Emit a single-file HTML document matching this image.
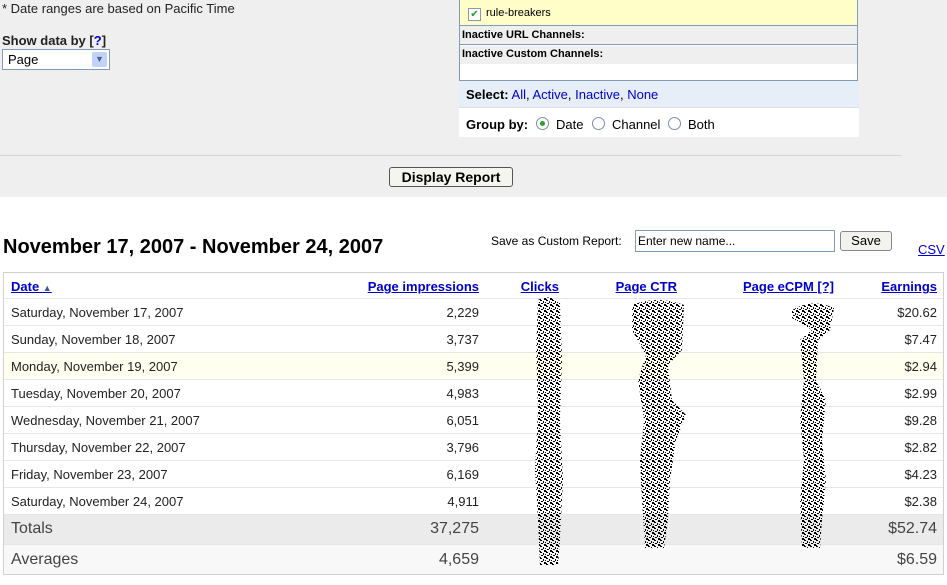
<!DOCTYPE html>
<html><head><meta charset="utf-8"><style>
*{margin:0;padding:0;box-sizing:border-box}
body{width:947px;height:585px;overflow:hidden;background:#fff;font-family:"Liberation Sans",Arial,sans-serif;position:relative;color:#000}
.a{position:absolute;white-space:nowrap}
a,.lk{color:#00c;}
.top{position:absolute;left:0;top:0;width:947px;height:197px;background:#efefef}
.hl{position:absolute;left:0;top:155px;width:901px;height:1px;background:#d4d4d4}
.panel{position:absolute;left:459px;top:0;width:399px;height:81px;border:1px solid #7f9db9;border-top:none;background:#fff}
.tbl{position:absolute;left:3px;top:272px;width:941px;height:303px;border:1px solid #d0d0d0}
.row{position:absolute;left:0;width:939px;height:27px;border-top:1px solid #e6e6e6;font-size:13px;color:#222}
.row span{position:absolute;top:6px}
.hd{font-size:13px;font-weight:bold;text-decoration:underline;color:#00c;top:6px}
</style></head><body>
<div class="top"></div>
<div class="a" style="left:2px;top:1px;font-size:13px;color:#222">* Date ranges are based on Pacific Time</div>
<div class="a" style="left:2px;top:33px;font-size:13px;font-weight:bold;color:#222">Show data by [<span style="color:#00c">?</span>]</div>
<div class="a" style="left:2px;top:49px;width:108px;height:21px;border:1px solid #7f9db9;background:#fff;font-size:13px;padding:2px 0 0 5px">Page
<div style="position:absolute;right:2px;top:2px;width:15px;height:15px;background:#c1d3fb;border-radius:2px;color:#4d6185;font-size:9px;text-align:center;line-height:15px">&#9660;</div></div>
<div class="hl"></div>
<div class="panel">
<div style="position:absolute;left:0;top:0;width:397px;height:26px;background:#fffdc8;border-bottom:1px solid #7f9db9"></div>
<div class="a" style="left:8px;top:8px;width:13px;height:13px;border:1px solid #8a9aaa;background:#fff;color:#21a121;font-size:10px;line-height:11px;text-align:center">&#10004;</div>
<div class="a" style="left:26px;top:7px;font-size:11px">rule-breakers</div>
<div style="position:absolute;left:0;top:26px;width:397px;height:19px;background:#efefef;border-bottom:1px solid #7f9db9"></div>
<div class="a" style="left:2px;top:29px;font-size:11px;font-weight:bold">Inactive URL Channels:</div>
<div style="position:absolute;left:0;top:46px;width:397px;height:18px;background:#efefef"></div>
<div class="a" style="left:2px;top:48px;font-size:11px;font-weight:bold">Inactive Custom Channels:</div>
</div>
<div style="position:absolute;left:459px;top:81px;width:400px;height:27px;background:#e6eef8;border-bottom:1px solid #dde"></div>
<div class="a" style="left:466px;top:87px;font-size:13px"><b>Select:</b> <span class="lk">All</span>, <span class="lk">Active</span>, <span class="lk">Inactive</span>, <span class="lk">None</span></div>
<div style="position:absolute;left:459px;top:108px;width:400px;height:29px;background:#fff"></div>
<div class="a" style="left:466px;top:117px;font-size:13px"><b>Group by:</b></div>
<div class="a" style="left:536px;top:117px;width:13px;height:13px;border:1px solid #7a8ea8;border-radius:50%;background:#fff"><div style="position:absolute;left:3px;top:3px;width:5px;height:5px;border-radius:50%;background:#2aa02a"></div></div>
<div class="a" style="left:556px;top:117px;font-size:13px">Date</div>
<div class="a" style="left:592px;top:117px;width:13px;height:13px;border:1px solid #7a8ea8;border-radius:50%;background:#fff"></div>
<div class="a" style="left:612px;top:117px;font-size:13px">Channel</div>
<div class="a" style="left:668px;top:117px;width:13px;height:13px;border:1px solid #7a8ea8;border-radius:50%;background:#fff"></div>
<div class="a" style="left:688px;top:117px;font-size:13px">Both</div>
<div class="a" style="left:389px;top:167px;width:124px;height:20px;border:1px solid #555;border-radius:3px;background:#f5f5f0;font-size:14px;font-weight:bold;text-align:center;line-height:18px">Display Report</div>

<div class="a" style="left:3px;top:236px;font-size:20px;font-weight:bold">November 17, 2007 - November 24, 2007</div>
<div class="a" style="left:491px;top:234px;font-size:12px">Save as Custom Report:</div>
<div class="a" style="left:635px;top:230px;width:200px;height:22px;border:1px solid #7f9db9;font-size:12px;padding:3px 2px">Enter new name...</div>
<div class="a" style="left:840px;top:231px;width:52px;height:20px;border:1px solid #888;border-radius:3px;background:#f2f2ee;font-size:13px;text-align:center;line-height:18px">Save</div>
<div class="a" style="left:918px;top:242px;font-size:13px;color:#00c;text-decoration:underline">CSV</div>

<div class="tbl">
<div class="a hd" style="left:7px">Date <span style="font-size:9px;color:#3a5a8a;text-decoration:none">&#9650;</span></div>
<div class="a hd" style="right:464px">Page impressions</div>
<div class="a hd" style="right:384px">Clicks</div>
<div class="a hd" style="right:266px">Page CTR</div>
<div class="a hd" style="right:109px">Page eCPM [?]</div>
<div class="a hd" style="right:6px">Earnings</div>

<div class="row" style="top:25px"><span style="left:7px">Saturday, November 17, 2007</span><span style="right:464px">2,229</span><span style="right:6px">$20.62</span></div>
<div class="row" style="top:52px"><span style="left:7px">Sunday, November 18, 2007</span><span style="right:464px">3,737</span><span style="right:6px">$7.47</span></div>
<div class="row" style="top:79px;background:#fffff0"><span style="left:7px">Monday, November 19, 2007</span><span style="right:464px">5,399</span><span style="right:6px">$2.94</span></div>
<div class="row" style="top:106px"><span style="left:7px">Tuesday, November 20, 2007</span><span style="right:464px">4,983</span><span style="right:6px">$2.99</span></div>
<div class="row" style="top:133px"><span style="left:7px">Wednesday, November 21, 2007</span><span style="right:464px">6,051</span><span style="right:6px">$9.28</span></div>
<div class="row" style="top:160px"><span style="left:7px">Thursday, November 22, 2007</span><span style="right:464px">3,796</span><span style="right:6px">$2.82</span></div>
<div class="row" style="top:187px"><span style="left:7px">Friday, November 23, 2007</span><span style="right:464px">6,169</span><span style="right:6px">$4.23</span></div>
<div class="row" style="top:214px"><span style="left:7px">Saturday, November 24, 2007</span><span style="right:464px">4,911</span><span style="right:6px">$2.38</span></div>
<div class="row" style="top:241px;height:30px;background:#ebebeb;font-size:16px;color:#444"><span style="left:7px;top:5px">Totals</span><span style="right:464px;top:5px">37,275</span><span style="right:6px;top:5px">$52.74</span></div>
<div class="row" style="top:271px;height:30px;background:#f8f8f8;font-size:16px;color:#444"><span style="left:7px;top:6px">Averages</span><span style="right:464px;top:6px">4,659</span><span style="right:6px;top:6px">$6.59</span></div>
</div>

<svg class="a" style="left:0;top:0" width="947" height="585">
<defs><pattern id="n" width="6" height="6" patternUnits="userSpaceOnUse"><rect width="2" height="1" fill="#000"/><rect x="3" y="1" width="1" height="2" fill="#000"/><rect x="1" y="3" width="2" height="1" fill="#000"/><rect x="4" y="4" width="2" height="2" fill="#000"/><rect x="0" y="5" width="1" height="1" fill="#000"/><rect x="5" y="2" width="1" height="1" fill="#000"/></pattern></defs>
<path d="M538 300 Q548 294 560 302 L562 360 L560 420 L563 480 L560 540 L558 565 L540 565 L538 520 L535 470 L538 410 L536 350 Z" fill="url(#n)"/>
<path d="M632 305 Q658 295 684 305 L682 350 L668 365 L672 400 L686 415 L676 440 L670 480 L668 520 L664 548 L645 548 L642 500 L640 460 L644 420 L638 380 L646 355 L632 330 Z" fill="url(#n)"/>
<path d="M792 310 Q812 298 834 308 L830 330 L818 340 L816 380 L826 400 L822 440 L826 480 L822 520 L820 548 L802 548 L800 500 L804 460 L800 420 L804 380 L800 340 L812 330 L792 318 Z" fill="url(#n)"/>
</svg>
</body></html>
